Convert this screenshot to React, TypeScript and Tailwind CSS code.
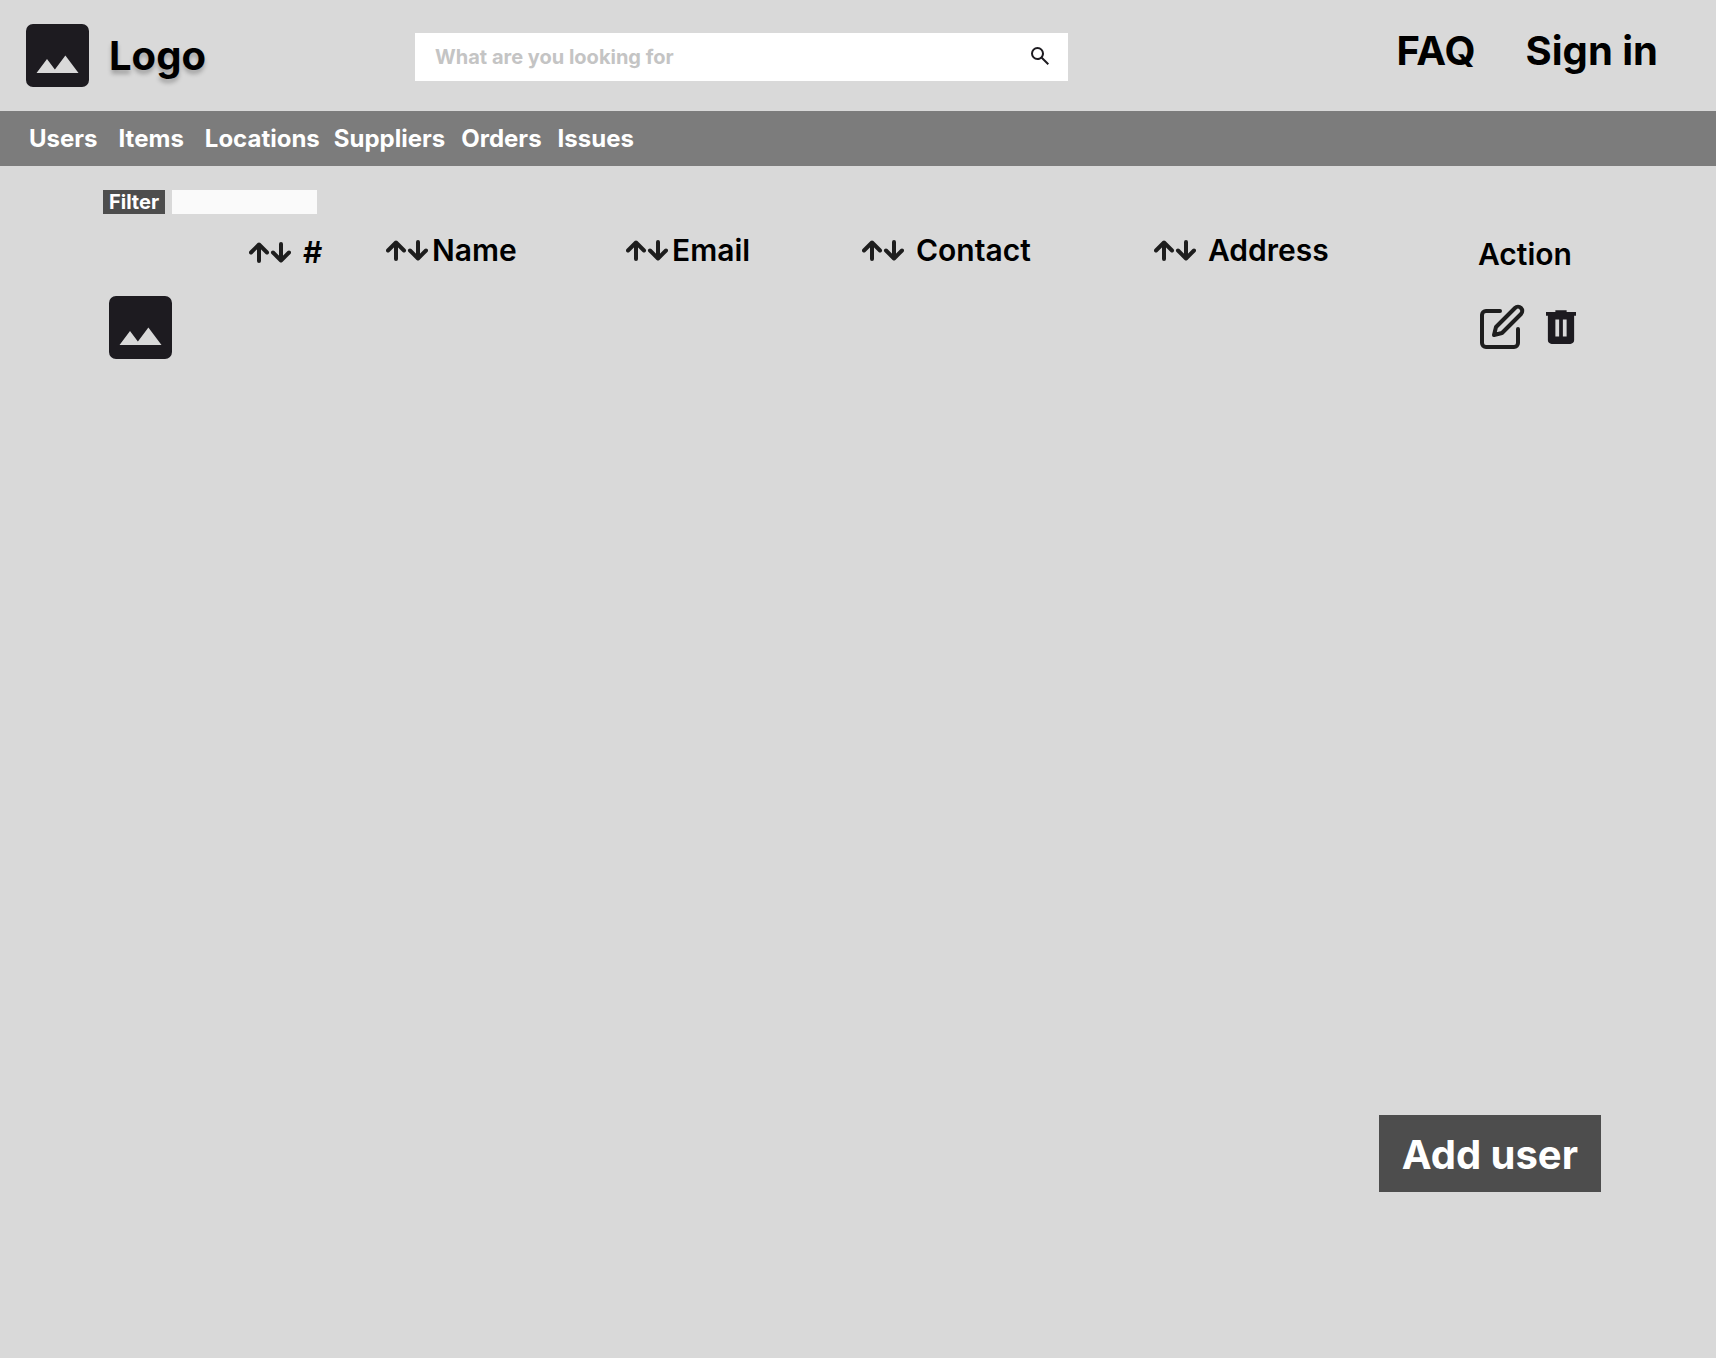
import React from "react";

function ImageIcon() {
  return (
    <svg viewBox="3 3 18 18" className="size-[63px] shrink-0 fill-[#1d1b20]" aria-hidden="true">
      <path d="M5 21q-.825 0-1.412-.587T3 19V5q0-.825.588-1.412T5 3h14q.825 0 1.413.588T21 5v14q0 .825-.587 1.413T19 21zm1-4h12l-3.75-5-3 4L9 13z" />
    </svg>
  );
}

function SearchIcon() {
  return (
    <svg viewBox="3 3 18 18" className="size-[18px] fill-[#1d1b20]" aria-hidden="true">
      <path d="m19.6 21-6.3-6.3q-.75.6-1.725.95T9.5 16q-2.725 0-4.612-1.887T3 9.5t1.888-4.612T9.5 3t4.613 1.888T16 9.5q0 1.1-.35 2.075T14.7 13.3l6.3 6.3zM9.5 14q1.875 0 3.188-1.312T14 9.5t-1.312-3.187T9.5 5 6.313 6.313 5 9.5t1.313 3.188T9.5 14" />
    </svg>
  );
}

function SortIcon() {
  return (
    <svg
      viewBox="0 0 42 21"
      className="h-[21px] w-[42px] shrink-0 fill-none stroke-[#1e1e1e] stroke-4"
      strokeLinecap="round"
      strokeLinejoin="round"
      aria-hidden="true"
    >
      <path d="M10 19V2.500M2 10.500l8-8 8 8" />
      <path d="M32 2v16.500M24 10.500l8 8 8-8" />
    </svg>
  );
}

function EditIcon() {
  return (
    <svg
      viewBox="0 0 24 24"
      className="size-12 fill-none stroke-[#1e1e1e] stroke-2"
      strokeLinecap="round"
      strokeLinejoin="round"
      aria-hidden="true"
    >
      <path d="M11 4H4a2 2 0 0 0-2 2v14a2 2 0 0 0 2 2h14a2 2 0 0 0 2-2v-7" />
      <path d="M18.5 2.500a2.121 2.121 0 0 1 3 3L12 15l-4 1 1-4z" />
    </svg>
  );
}

function TrashIcon() {
  return (
    <svg viewBox="4 3 16 18" className="h-[34px] w-[30px] fill-[#1d1b20]" aria-hidden="true">
      <path d="M7 21q-.825 0-1.412-.587T5 19V6H4V4h5V3h6v1h5v2h-1v13q0 .825-.587 1.413T17 21zm2-4h2V8H9zm4 0h2V8h-2z" />
    </svg>
  );
}

const mainLinks = ["Users", "Items", "Locations"];
const moreLinks = ["Suppliers", "Orders", "Issues"];

const columns = [
  { label: "#", gap: "gap-3", align: "align-middle" },
  { label: "Name", gap: "gap-1", align: "align-top" },
  { label: "Email", gap: "gap-1", align: "align-top" },
  { label: "Contact", gap: "gap-3", align: "align-top" },
  { label: "Address", gap: "gap-3", align: "align-top" },
];

export default function App() {
  return (
    <div className="flex min-h-screen flex-col bg-[#d9d9d9] font-['Inter',sans-serif] text-black">
      <header className="grid h-[111px] grid-cols-[389fr_653fr_648fr] items-center pl-[26px]">
        <a href="#home" className="flex items-center gap-5">
          <ImageIcon />
          <span className="text-[40px] leading-[48px] font-bold [text-shadow:0_4px_4px_rgba(0,0,0,0.25)]">
            Logo
          </span>
        </a>
        <form role="search" className="mb-[-3px] flex h-12 items-center bg-white pr-[19px] pl-5">
          <input
            type="search"
            aria-label="Search"
            placeholder="What are you looking for"
            className="min-w-0 flex-1 text-[20px] leading-6 font-bold outline-none placeholder:text-[#c4c4c4]"
          />
          <button type="button" aria-label="Search" className="pb-[2px]">
            <SearchIcon />
          </button>
        </form>
        <nav aria-label="Account" className="flex justify-end gap-[50px] pr-[58px] pb-[10px] text-[40px] leading-[48px] font-bold">
          <a href="#faq">FAQ</a>
          <a href="#sign-in">Sign in</a>
        </nav>
      </header>

      <nav aria-label="Sections" className="flex h-[55px] items-center gap-[14px] bg-[#7c7c7c] px-[29px] text-[24px] leading-[29px] font-bold text-white">
        <div className="flex gap-[21px]">
          {mainLinks.map((label) => (
            <a key={label} href={`#${label.toLowerCase()}`}>
              {label}
            </a>
          ))}
        </div>
        <div className="flex gap-4">
          {moreLinks.map((label) => (
            <a key={label} href={`#${label.toLowerCase()}`}>
              {label}
            </a>
          ))}
        </div>
      </nav>

      <main className="flex flex-1 flex-col pt-6 pr-[115px] pb-[166px] pl-[103px]">
        <div className="flex gap-[7px]">
          <label htmlFor="filter" className="flex h-6 w-[62px] items-center justify-center bg-[#4d4d4d] text-[20px] leading-6 font-bold text-white">
            Filter
          </label>
          <input id="filter" type="text" className="h-6 w-[145px] bg-[#fafafa] px-2 outline-none" />
        </div>

        <div className="pt-[18px] pl-[6px]">
          <table className="w-full table-fixed">
            <colgroup>
              <col className="w-[140px]" />
              <col className="w-[137px]" />
              <col className="w-[240px]" />
              <col className="w-[236px]" />
              <col className="w-[292px]" />
              <col className="w-[324px]" />
              <col className="w-[123px]" />
            </colgroup>
            <thead>
              <tr className="h-10 text-left text-[30px] leading-9">
                <td />
                {columns.map(({ label, gap, align }) => (
                  <th key={label} className={`p-0 font-semibold ${align}`}>
                    <button type="button" className={`flex items-center ${gap}`}>
                      <SortIcon />
                      {label}
                    </button>
                  </th>
                ))}
                <th className="p-0 align-bottom font-semibold">Action</th>
              </tr>
            </thead>
            <tbody>
              <tr>
                <td className="pt-6">
                  <ImageIcon />
                </td>
                <td />
                <td />
                <td />
                <td />
                <td />
                <td className="pt-[22px]">
                  <div className="flex items-center gap-5">
                    <button type="button" aria-label="Edit user">
                      <EditIcon />
                    </button>
                    <button type="button" aria-label="Delete user">
                      <TrashIcon />
                    </button>
                  </div>
                </td>
              </tr>
            </tbody>
          </table>
        </div>

        <button type="button" className="mt-auto self-end bg-[#4d4d4d] px-[23px] pt-[15px] pb-[13px] text-[40px] leading-[49px] font-bold text-white">
          Add user
        </button>
      </main>
    </div>
  );
}
